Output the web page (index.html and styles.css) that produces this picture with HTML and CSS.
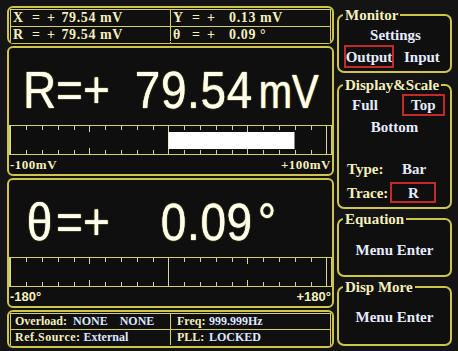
FILE: index.html
```html
<!DOCTYPE html>
<html>
<head>
<meta charset="utf-8">
<link rel="stylesheet" href="styles.css">
</head>
<body>
<div class="screen">
  <div class="left">
    <div class="box readout">
      <div class="grid">
        <div class="cell"><span class="n">X</span><span class="e">=</span><span class="s">+</span><span class="v">79.54</span><span class="u">mV</span></div>
        <div class="cell"><span class="n">Y</span><span class="e">=</span><span class="s">+</span><span class="v">0.13</span><span class="u">mV</span></div>
        <div class="cell"><span class="n">R</span><span class="e">=</span><span class="s">+</span><span class="v">79.54</span><span class="u">mV</span></div>
        <div class="cell"><span class="n">θ</span><span class="e">=</span><span class="s">+</span><span class="v">0.09</span><span class="u">°</span></div>
      </div>
    </div>

    <div class="box panel">
      <div class="big">
        <span class="p lbl">R</span><span class="p">=</span><span class="p">+</span><span class="p val">79.54</span><span class="p unit mv">mV</span>
      </div>
      <div class="bar">
        <svg width="321" height="28" viewBox="0 0 321 28">
          <path class="tick" d="M16.5 0v4M32.5 0v4M48.5 0v4M64.5 0v4M95.5 0v4M111.5 0v4M127.5 0v4M143.5 0v4M174.5 0v4M190.5 0v4M206.5 0v4M222.5 0v4M253.5 0v4M269.5 0v4M285.5 0v4M301.5 0v4M16.5 24v4M32.5 24v4M48.5 24v4M64.5 24v4M95.5 24v4M111.5 24v4M127.5 24v4M143.5 24v4M174.5 24v4M190.5 24v4M206.5 24v4M222.5 24v4M253.5 24v4M269.5 24v4M285.5 24v4M301.5 24v4M79.5 0v6M237.5 0v6M79.5 22v6M237.5 22v6M0.5 0v28M158.5 0v28M316.5 0v28"/>
          <rect class="fill" x="158.5" y="6" width="126" height="17"/>
        </svg>
      </div>
      <div class="scale serif"><span>-100mV</span><span>+100mV</span></div>
    </div>

    <div class="box panel">
      <div class="big">
        <span class="p lbl">θ</span><span class="p">=</span><span class="p">+</span><span class="p val">0.09</span><span class="p unit deg">°</span>
      </div>
      <div class="bar">
        <svg width="321" height="28" viewBox="0 0 321 28">
          <path class="tick" d="M16.5 0v4M32.5 0v4M48.5 0v4M64.5 0v4M95.5 0v4M111.5 0v4M127.5 0v4M143.5 0v4M174.5 0v4M190.5 0v4M206.5 0v4M222.5 0v4M253.5 0v4M269.5 0v4M285.5 0v4M301.5 0v4M16.5 24v4M32.5 24v4M48.5 24v4M64.5 24v4M95.5 24v4M111.5 24v4M127.5 24v4M143.5 24v4M174.5 24v4M190.5 24v4M206.5 24v4M222.5 24v4M253.5 24v4M269.5 24v4M285.5 24v4M301.5 24v4M79.5 0v6M237.5 0v6M79.5 22v6M237.5 22v6M0.5 0v28M158.5 0v28M316.5 0v28"/>
        </svg>
      </div>
      <div class="scale sans"><span>-180°</span><span>+180°</span></div>
    </div>

    <div class="box status">
      <div class="grid sgrid">
        <div class="scell"><span class="lab">Overload:</span><span class="val1">NONE</span><span class="val2">NONE</span></div>
        <div class="scell c2"><span class="lab w">Freq:</span><span class="valb">999.999Hz</span></div>
        <div class="scell"><span class="lab ref">Ref.Source:</span><span class="valc">External</span></div>
        <div class="scell c2"><span class="lab w">PLL:</span><span class="valb">LOCKED</span></div>
      </div>
    </div>
  </div>

  <div class="right">
    <fieldset class="fs monitor">
      <legend>Monitor</legend>
      <div class="center settings">Settings</div>
      <div class="row out-row"><span class="sel output">Output</span><span class="input">Input</span></div>
    </fieldset>

    <fieldset class="fs display">
      <legend>Display&amp;Scale</legend>
      <div class="row full-row"><span class="full">Full</span><span class="sel top">Top</span></div>
      <div class="center bottom">Bottom</div>
      <div class="row type-row"><span class="lab2 type">Type:</span><span class="opt">Bar</span></div>
      <div class="row trace-row"><span class="lab2">Trace:</span><span class="sel trace">R</span></div>
    </fieldset>

    <fieldset class="fs equation">
      <legend>Equation</legend>
      <div class="center menu m1">Menu Enter</div>
    </fieldset>

    <fieldset class="fs more">
      <legend>Disp More</legend>
      <div class="center menu m2">Menu Enter</div>
    </fieldset>
  </div>
</div>
</body>
</html>
```
FILE: styles.css
```css
* { box-sizing: border-box; }

body {
  margin: 0;
  width: 458px;
  height: 351px;
  overflow: hidden;
  background: #141414;
  font-family: "Liberation Serif", "Times New Roman", serif;
  font-weight: bold;
}

.screen {
  display: flex;
  gap: 3px;
  padding: 6px 0 0 7px;
  height: 351px;
}

.left {
  width: 327px;
  display: flex;
  flex-direction: column;
  gap: 2px;
}

.box {
  border: 2px solid #cdc54c;
  border-radius: 6px;
  background: #0f0f0f;
}

/* top readout */
.readout, .status {
  height: 38px;
  padding: 1px;
}

.grid {
  display: grid;
  grid-template-columns: 159px 1fr;
  grid-template-rows: 1fr 1fr;
  gap: 1px;
  height: 100%;
  background: #d8d060;
  border: 1px solid #d8d060;
}

.cell {
  background: #101010;
  display: flex;
  align-items: center;
  padding-left: 2px;
  color: #f5efbc;
  font-size: 14px;
  letter-spacing: 0.6px;
  white-space: pre;
}

.cell .n { width: 19px; }
.cell .e { width: 15px; }
.cell .s { width: 13px; }
.cell .v { width: 36px; text-align: right; }
.cell .u { margin-left: 4px; }

/* big panels */
.panel {
  height: 130px;
  display: flex;
  flex-direction: column;
}

.big {
  margin-top: 21px;
  height: 46px;
  display: flex;
  align-items: baseline;
  padding-left: 14px;
  font-family: "Liberation Sans", Arial, sans-serif;
  font-weight: normal;
  font-size: 46px;
  line-height: 46px;
  color: #fffff2;
  text-shadow: 0 0 1px #d8d060, 0 0 1px #d8d060;
}

.big .p {
  display: inline-block;
  transform-origin: 0 39px;
  transform: scaleY(1.14);
}

.big .lbl { width: 33px; text-align: center; }
.big .val { width: 118px; text-align: right; margin-left: 25px; letter-spacing: 0.6px; }
.big .mv { font-size: 40px; margin-left: 6px; transform-origin: 0 37px; transform: scaleY(1.2); }
.big .deg { margin-left: 5px; }

.bar {
  margin-top: 10px;
  height: 30px;
  border: 1px solid #d8d060;
  background: #0e0e0e;
}

.bar svg { display: block; }
.tick { stroke: #d8d4a4; stroke-width: 1; fill: none; }
.fill { fill: #ffffff; }

.scale {
  flex: 1;
  display: flex;
  justify-content: space-between;
  align-items: center;
  padding: 0 1px 0 1px;
  color: #f5efbc;
  font-size: 13px;
  letter-spacing: 0.5px;
}

.scale.sans {
  font-family: "Liberation Sans", Arial, sans-serif;
  letter-spacing: 0;
}

/* status */
.scell {
  background: #101010;
  display: flex;
  align-items: center;
  padding-left: 4px;
  font-size: 12px;
  color: #f5efbc;
  white-space: pre;
}

.scell.c2 { padding-left: 6px; }
.lab.w { width: 32px; }
.lab.ref { letter-spacing: 0.5px; }
.val1 { margin-left: 6px; color: #dfe6ff; }
.val2 { margin-left: 12px; color: #dfe6ff; }
.valb { color: #dfe6ff; }
.valc { margin-left: 3px; color: #dfe6ff; }

/* right column */
.right {
  width: 115px;
  display: flex;
  flex-direction: column;
  padding-top: 1px;
}

.fs {
  margin: 0;
  padding: 0 2px;
  min-width: 0;
  border: 2px solid #cdc54c;
  border-radius: 7px;
  background: #0f0f0f;
  font-size: 15px;
  line-height: 16px;
  color: #e6ecff;
}

.fs legend {
  padding: 0 2px;
  margin-left: 2px;
  color: #f5efbc;
  font-size: 15px;
  line-height: 16px;
}

.monitor { height: 66px; }
.display { height: 132px; margin-top: 4px; }
.equation { height: 66px; margin-top: 2px; }
.more { height: 67px; margin-top: 2px; }

.center { text-align: center; }
.row { display: flex; align-items: center; }

.sel {
  display: flex;
  align-items: center;
  justify-content: center;
  border: 2px solid #c42a2a;
}

.settings { margin-top: 4px; padding-left: 2px; }
.out-row { margin-top: 2px; padding-left: 3px; }
.output { width: 50px; height: 23px; }
.input { margin-left: 10px; }

.full-row { margin-top: 1px; padding-left: 11px; height: 22px; }
.top { width: 43px; height: 22px; margin-left: 24px; }
.bottom { margin-top: 3px; }
.type-row { margin-top: 26px; padding-left: 6px; }
.lab2 { color: #f5efbc; }
.type { width: 55px; }
.trace-row { margin-top: 5px; padding-left: 6px; }
.trace { width: 46px; height: 21px; margin-left: 2px; }

.m1 { margin-top: 15px; }
.m2 { margin-top: 14px; }
```
